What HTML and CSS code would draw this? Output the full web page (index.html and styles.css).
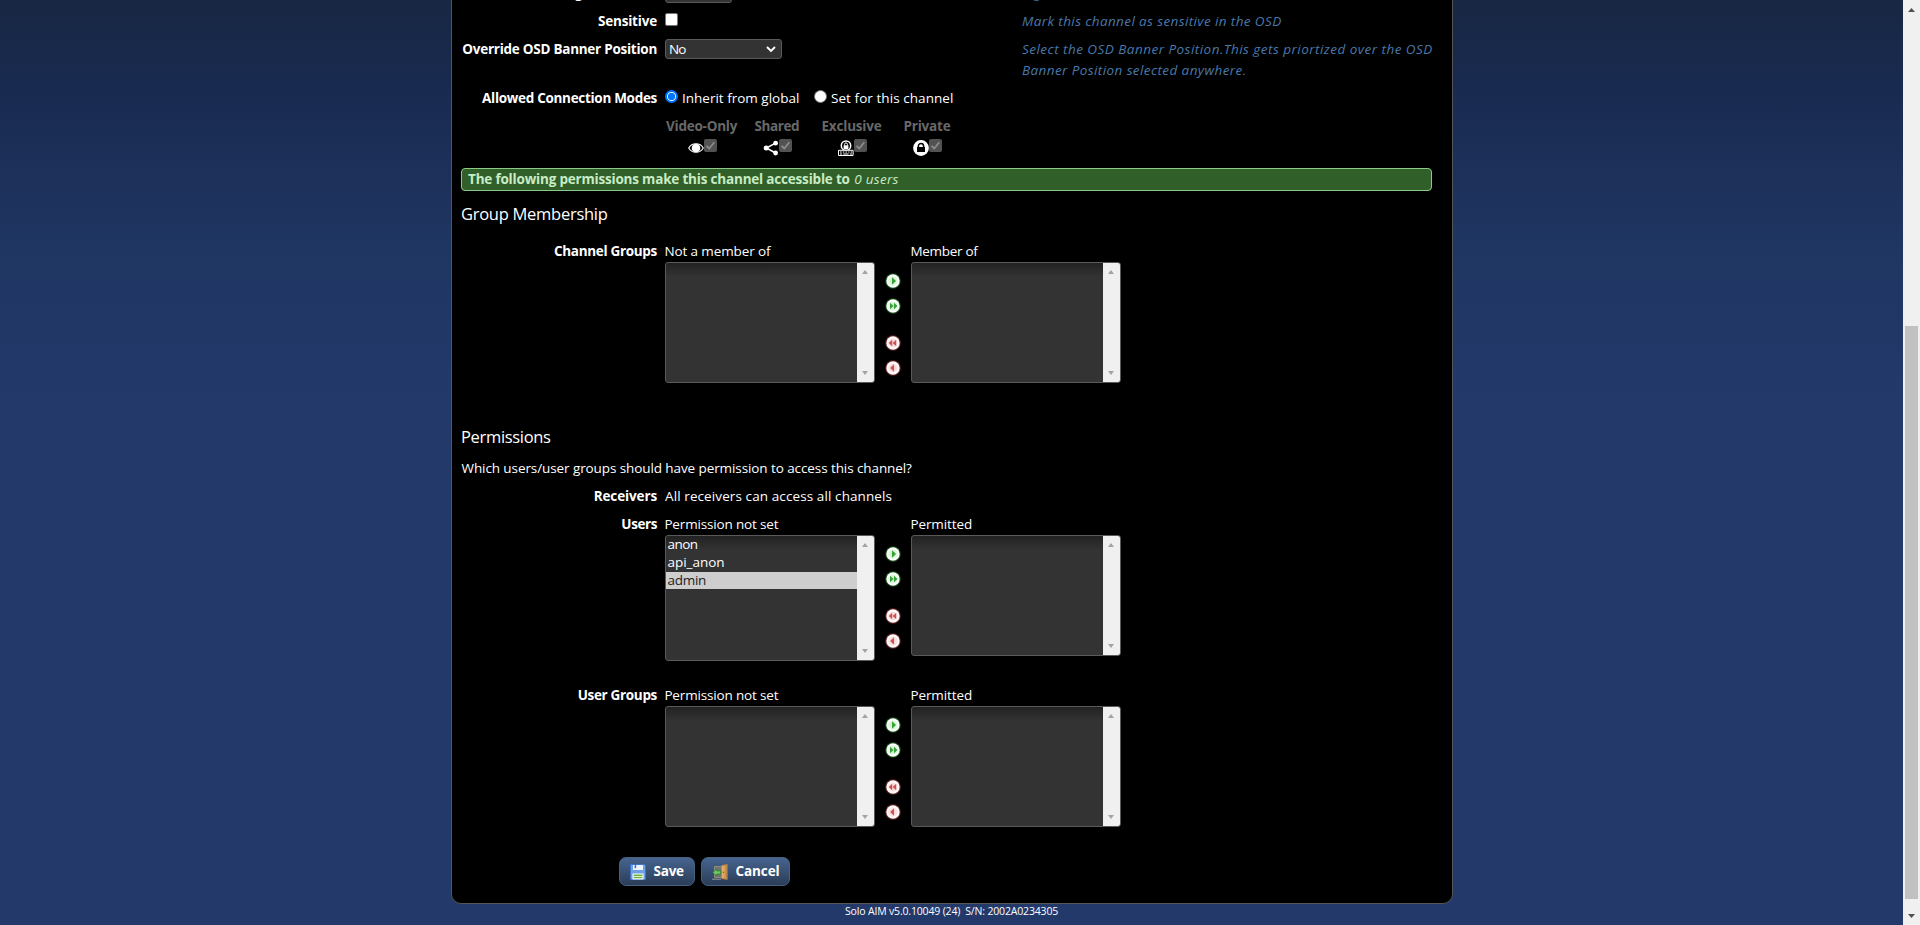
FILE: index.html
```html
<!DOCTYPE html>
<html lang="en">
<head>
<meta charset="utf-8">
<title>Configure Channel</title>
<link rel="stylesheet" href="styles.css">
</head>
<body>
<svg class="defs" width="0" height="0" aria-hidden="true">
  <defs>
    <radialGradient id="gGreen"><stop offset="0" stop-color="#c4ecc4"/><stop offset=".6" stop-color="#e2f5e2"/><stop offset=".8" stop-color="#fff"/><stop offset="1" stop-color="#f4fbf4"/></radialGradient>
    <radialGradient id="gRed"><stop offset="0" stop-color="#f9cccc"/><stop offset=".6" stop-color="#fbe4e4"/><stop offset=".8" stop-color="#fff"/><stop offset="1" stop-color="#fdf4f4"/></radialGradient>
    <g id="ringGreen"><circle cx="8" cy="8" r="7.8" fill="#2c8a2c" opacity=".55"/><circle cx="8" cy="8" r="6.7" fill="url(#gGreen)"/></g>
    <g id="ringRed"><circle cx="8" cy="8" r="7.8" fill="#b04444" opacity=".55"/><circle cx="8" cy="8" r="6.7" fill="url(#gRed)"/></g>
    <symbol id="add" viewBox="0 0 16 16"><use href="#ringGreen"/><path d="M7 4.2v7.6l4-3.8z" fill="#35a435"/></symbol>
    <symbol id="addAll" viewBox="0 0 16 16"><use href="#ringGreen"/><path d="M5 4.8v6.4L8.5 8zM9 4.8v6.4l3.5-3.2z" fill="#35a435"/></symbol>
    <symbol id="delAll" viewBox="0 0 16 16"><use href="#ringRed"/><path d="M7.2 4.8v6.4L3.7 8zM11.2 4.8v6.4L7.7 8z" fill="#cc5252"/></symbol>
    <symbol id="del" viewBox="0 0 16 16"><use href="#ringRed"/><path d="M9 4.2v7.6L5.2 8z" fill="#cc5252"/></symbol>
    <symbol id="tick" viewBox="0 0 13 13"><path d="M2.6 6.8l2.7 2.7 5-6.2" fill="none" stroke="#8c8c8c" stroke-width="1.8"/></symbol>
    <linearGradient id="wood" x2="1"><stop stop-color="#e9b876"/><stop offset="1" stop-color="#c08240"/></linearGradient>
  </defs>
</svg>
<div class="page">
  <main class="panel">
    <div class="row row-usb">
      <div class="label">g Enabled</div>
      <div class="control"><span class="select select-short"></span></div>
      <div class="help">g</div>
    </div>
    <div class="row row-sensitive">
      <div class="label t-sensitive">Sensitive</div>
      <div class="control"><span class="check"></span></div>
      <div class="help t-mark">Mark this channel as sensitive in the OSD</div>
    </div>
    <div class="row row-banner">
      <div class="label t-override">Override OSD Banner Position</div>
      <div class="control"><span class="select"><span class="t-no">No</span><svg width="10" height="7" viewBox="0 0 10 7"><path d="M1 1l4 4 4-4" fill="none" stroke="#fff" stroke-width="1.9"/></svg></span></div>
      <div class="help"><div class="t-select">Select the OSD Banner Position.This gets priortized over the OSD</div><div class="t-banner">Banner Position selected anywhere.</div></div>
    </div>
    <div class="row row-allowed">
      <div class="label t-allowed">Allowed Connection Modes</div>
      <div class="control radios">
        <span class="radio radio-on"></span><span class="radio-text t-inherit">Inherit from global</span>
        <span class="radio"></span><span class="radio-text t-set">Set for this channel</span>
      </div>
    </div>
    <div class="modes">
      <div class="mode m-video"><div class="t-video">Video-Only</div>
        <div class="mode-icons"><svg width="16" height="16" viewBox="0 0 16 16"><path d="M.7 8C4 2.4 12 2.4 15.3 8 12 13.6 4 13.6.7 8z" fill="none" stroke="#fff" stroke-width="1.1"/><circle cx="8" cy="8" r="4.3" fill="#fff"/></svg><span class="check check-off"><svg width="13" height="13"><use href="#tick"/></svg></span></div></div>
      <div class="mode m-shared"><div class="t-shared">Shared</div>
        <div class="mode-icons"><svg width="16" height="16" viewBox="0 0 16 16"><path d="M12.5 3.2L3.4 8l9.1 5" fill="none" stroke="#fff" stroke-width="1.5"/><circle cx="3.2" cy="8" r="2.5" fill="#fff"/><circle cx="12.6" cy="3.2" r="2.4" fill="#fff"/><circle cx="12.6" cy="13" r="2.4" fill="#fff"/></svg><span class="check check-off"><svg width="13" height="13"><use href="#tick"/></svg></span></div></div>
      <div class="mode m-exclusive"><div class="t-exclusive">Exclusive</div>
        <div class="mode-icons"><svg width="16" height="16" viewBox="0 0 16 16"><circle cx="8" cy="5.7" r="4.7" fill="none" stroke="#fff" stroke-width="1.5"/><path d="M5.6 5.3h4.8v3.9H5.6z" fill="#fff"/><path d="M6.6 5.6V4.3a1.4 1.4 0 0 1 2.8 0v1.3" fill="none" stroke="#fff"/><path d="M.5 10.3h14.6v5.2H.5z" fill="#000" stroke="#fff"/><path d="M2 12h1.6m1.2 0h1.5m1.2 0H9m1.2 0h1.3m1.2 0H14M2 14h2m1.2 0h5.4m1.2 0H14" stroke="#fff" stroke-width="1.1"/></svg><span class="check check-off"><svg width="13" height="13"><use href="#tick"/></svg></span></div></div>
      <div class="mode m-private"><div class="t-private">Private</div>
        <div class="mode-icons"><svg width="16" height="16" viewBox="0 0 16 16"><circle cx="8" cy="8" r="7.9" fill="#fff"/><path d="M4 7h8v5H4z" fill="#000"/><path d="M5.4 7.3V6a2.6 2.6 0 0 1 5.2 0v1.3" fill="none" stroke="#000" stroke-width="1.5"/></svg><span class="check check-off"><svg width="13" height="13"><use href="#tick"/></svg></span></div></div>
    </div>

    <div class="notice"><b class="t-following">The following permissions make this channel accessible to</b><i class="t-zero">0 users</i></div>

    <h2 class="heading t-group">Group Membership</h2>
    <div class="row row-groups">
      <div class="label t-channel">Channel Groups</div>
      <div class="transfer">
        <div class="side"><div class="t-notmember">Not a member of</div><div class="list"><div class="options"></div><div class="bar"></div></div></div>
        <div class="moves"><svg><use href="#add"/></svg><svg><use href="#addAll"/></svg><svg class="gap"><use href="#delAll"/></svg><svg><use href="#del"/></svg></div>
        <div class="side"><div class="t-member">Member of</div><div class="list"><div class="options"></div><div class="bar"></div></div></div>
      </div>
    </div>

    <h2 class="heading t-permissions">Permissions</h2>
    <p class="question t-which">Which users/user groups should have permission to access this channel?</p>
    <div class="row row-receivers">
      <div class="label t-receivers">Receivers</div>
      <div class="control receivers t-all">All receivers can access all channels</div>
    </div>
    <div class="row row-users">
      <div class="label t-users">Users</div>
      <div class="transfer">
        <div class="side"><div class="t-notset">Permission not set</div><div class="list list-tall"><div class="options"><div class="t-anon">anon</div><div class="t-api">api_anon</div><div class="selected t-admin">admin</div></div><div class="bar"></div></div></div>
        <div class="moves"><svg><use href="#add"/></svg><svg><use href="#addAll"/></svg><svg class="gap"><use href="#delAll"/></svg><svg><use href="#del"/></svg></div>
        <div class="side"><div class="t-permitted">Permitted</div><div class="list"><div class="options"></div><div class="bar"></div></div></div>
      </div>
    </div>
    <div class="row row-usergroups">
      <div class="label t-usergroups">User Groups</div>
      <div class="transfer">
        <div class="side"><div class="t-notset">Permission not set</div><div class="list"><div class="options"></div><div class="bar"></div></div></div>
        <div class="moves"><svg><use href="#add"/></svg><svg><use href="#addAll"/></svg><svg class="gap"><use href="#delAll"/></svg><svg><use href="#del"/></svg></div>
        <div class="side"><div class="t-permitted">Permitted</div><div class="list"><div class="options"></div><div class="bar"></div></div></div>
      </div>
    </div>

    <div class="actions">
      <div class="button button-save">
        <svg width="16" height="16" viewBox="0 0 16 16"><path d="M.5.5h14l1 1v14H.5z" fill="#6f9fe6" stroke="#3f73c6"/><path d="M3 1h10v5H3z" fill="#eef4fd"/><path d="M4.6 1h1.6v3.2H4.6z" fill="#3f73c6"/><path d="M2.5 9.5h11v6h-11z" fill="#fff"/><path d="M3.5 11.3h9M3.5 13.5h9" stroke="#6db33f" stroke-width="1.4"/></svg>
        <span class="t-save">Save</span>
      </div>
      <div class="button button-cancel">
        <svg width="16" height="16" viewBox="0 0 16 16"><path d="M2.5 2.5h7v11h-7z" fill="#74726e" stroke="#8d8a84"/><path d="M0 15.2h9" stroke="#999"/><path d="M9.5 1.6L15.3.3v15.2l-5.8-1z" fill="url(#wood)" stroke="#b07a3c" stroke-width=".7"/><path d="M10.8 8.3h1.2" stroke="#7a4a18"/><path d="M.8 8.4l3.9-3.5v2h4v3.2h-4v2z" fill="#6fc765" stroke="#2e8030" stroke-width=".8"/></svg>
        <span class="t-cancel">Cancel</span>
      </div>
    </div>
  </main>
  <footer class="footer">Solo AIM v5.0.10049 (24)&nbsp; S/N: 2002A0234305</footer>
</div>
<div class="scrollbar">
  <svg width="7" height="4"><path d="M0 4L3.5 0 7 4z" fill="#505050"/></svg>
  <div class="thumb"></div>
  <svg width="7" height="4"><path d="M0 0h7L3.5 4z" fill="#505050"/></svg>
</div>
</body>
</html>
```
FILE: styles.css
```css
* { box-sizing: border-box; }
html, body { margin: 0; height: 925px; overflow: hidden; }
body {
  display: flex;
  background: #22396a linear-gradient(#172743 0, #192a50 88px, #1f3561 236px, #22396a 400px) no-repeat;
  color: #fff;
  font: 13.5px/21px "Open Sans", sans-serif;
  white-space: nowrap;
}
svg { display: block; flex: none; }
.defs { position: absolute; }

.page { width: 1903px; height: 925px; overflow: hidden; }
.panel {
  width: 1002px;
  height: 923px;
  margin: -19px 0 0 451px;
  padding-top: 1px;
  background: #000;
  border: 1px solid #555;
  border-radius: 0 0 10px 10px;
}

.row { display: flex; }
.label { width: 206px; margin-right: 7px; padding: 1px 1px 0 0; text-align: right; font-weight: 700; flex: none; }
.control { width: 356px; flex: none; }
.help { padding: 1px 0 0 1px; color: #4a78aa; font-style: italic; }
.row-usb { height: 27px; }
.row-usb .label { padding: 0 18px 0 0; }
.row-usb .help { padding: 0 0 0 13px; }
.row-sensitive { height: 28px; }
.row-sensitive .control { padding-top: 3px; }
.row-banner { height: 49px; }
.row-banner .control { padding-top: 1px; }
.row-allowed { height: 28px; }
.row-groups { height: 175px; }
.row-receivers { height: 28px; }
.row-users { height: 171px; }
.row-usergroups { height: 173px; }

.check { display: block; width: 13px; height: 13px; background: #fff; border: 1px solid #767676; border-radius: 2px; }
.check-off { background: #525252; border: 0; }
.select {
  display: flex; align-items: center; justify-content: space-between;
  width: 117px; height: 20px; padding: 0 5px 0 3px;
  background: #333; border: 1px solid #5a5a5a; border-radius: 3px;
}
.select-short { width: 67px; }

.radios { display: flex; }
.radio { width: 13px; height: 13px; margin-top: 3px; background: #fff; border: 1px solid #767676; border-radius: 50%; }
.radio-on { border: 2px solid #0075ff; background: radial-gradient(circle, #0075ff 3.4px, #fff 4px); }
.radio-on + .radio-text { width: 132px; }
.radio-text { margin-left: 4px; padding-top: 1px; }

.modes { display: flex; height: 53px; padding-left: 212.5px; color: #686868; font-weight: 700; }
.mode { padding-top: 1px; }
.mode-icons { display: flex; align-items: flex-start; padding-top: 2px; }
.mode-icons > svg { margin-top: 1px; }
.m-video { width: 88px; padding-left: 1.5px; }
.m-video .mode-icons { padding-left: 22px; }
.m-shared { width: 69px; padding-left: 2px; }
.m-shared .mode-icons { padding-left: 8.5px; }
.m-exclusive { width: 82px; }
.m-exclusive .mode-icons { padding-left: 16.5px; }
.m-private .mode-icons { padding-left: 9.5px; }

.notice {
  display: flex; gap: 4.5px; width: 971px; height: 23px; margin-left: 9px; padding-left: 6px; line-height: 20px;
  background: #305f2a; border: 1px solid #8cc886; border-radius: 4px; color: #c8ecc4;
}
.heading { margin: 0; padding-left: 9px; font-size: 16.5px; font-weight: 400; line-height: 24px; }
.t-group { height: 49px; padding-top: 11px; }
.t-permissions { height: 42px; padding-top: 10px; }
.question { margin: 0; padding: 1px 0 0 9.5px; height: 28px; }
.receivers { padding-top: 1px; }

.transfer { display: flex; }
.side > div:first-child { height: 22px; padding-top: 1px; margin-left: -.6px; }
.list { display: flex; width: 210px; height: 121px; background: linear-gradient(#222, #333 14px); border: 1px solid #5a5a5a; border-radius: 3px; overflow: hidden; }
.list-tall { height: 126px; }
.options { flex: 1; line-height: 17px; }
.options > div { height: 17px; margin-bottom: 1px; padding-left: 1.5px; }
.selected { background: #cecece; color: #222; }
.bar { position: relative; width: 17px; background: #f0f0f0; }
.bar::before, .bar::after { content: ""; position: absolute; left: 5px; border: 3.5px solid transparent; }
.bar::before { top: 7px; border-top: 0; border-bottom: 4px solid #a3a3a3; }
.bar::after { bottom: 7px; border-bottom: 0; border-top: 4px solid #a3a3a3; }
.moves { display: flex; flex-direction: column; align-items: center; gap: 9px; width: 36px; padding-top: 33px; }
.moves svg { width: 16px; height: 16px; }
.moves .gap { margin-top: 12px; }

.actions { display: flex; gap: 6px; padding-left: 167px; }
.button {
  display: flex; align-items: center; gap: 7.5px; height: 29px; padding-left: 10px;
  background: linear-gradient(#46648f, #2b3d58); border: 1px solid #48617f; border-radius: 7px; font-weight: 700;
}
.button-save { width: 76px; }
.button-cancel { width: 89px; }
.footer { width: 213px; margin-left: 845px; font-size: 10.5px; line-height: 15px; letter-spacing: -.17px; }

.scrollbar { display: flex; flex-direction: column; align-items: center; width: 17px; padding: 8px 0 7px; background: #f0f0f0; }
.thumb { width: 13px; height: 573px; margin: 314px 0 auto; background: #c1c1c1; }

/* letter fit */
.t-sensitive { letter-spacing: -.19px; }
.t-override { letter-spacing: -.26px; }
.t-allowed { letter-spacing: -.3px; }
.t-channel { letter-spacing: -.31px; }
.t-receivers { letter-spacing: -.12px; }
.t-users { letter-spacing: -.42px; }
.t-usergroups { letter-spacing: -.33px; }
.t-set { letter-spacing: .06px; }
.t-video { letter-spacing: -.24px; }
.t-shared { letter-spacing: -.41px; }
.t-exclusive { letter-spacing: -.2px; }
.t-private { letter-spacing: -.21px; }
.t-following { letter-spacing: -.19px; }
.t-zero { letter-spacing: .28px; }
.t-mark { letter-spacing: .39px; }
.t-select { letter-spacing: .47px; }
.t-banner { letter-spacing: .41px; }
.t-group { letter-spacing: -.27px; }
.t-permissions { letter-spacing: -.33px; }
.t-notmember { letter-spacing: -.11px; }
.t-member { letter-spacing: -.3px; }
.t-which { letter-spacing: -.09px; }
.t-all { letter-spacing: .1px; }
.t-notset { letter-spacing: -.16px; }
.t-permitted { letter-spacing: -.1px; }
.t-anon { letter-spacing: -.55px; }
.t-api { letter-spacing: -.03px; }
.t-admin { letter-spacing: -.28px; }
.t-no { letter-spacing: -.9px; }
.t-save { letter-spacing: -.23px; }
.t-cancel { letter-spacing: -.1px; }
```
